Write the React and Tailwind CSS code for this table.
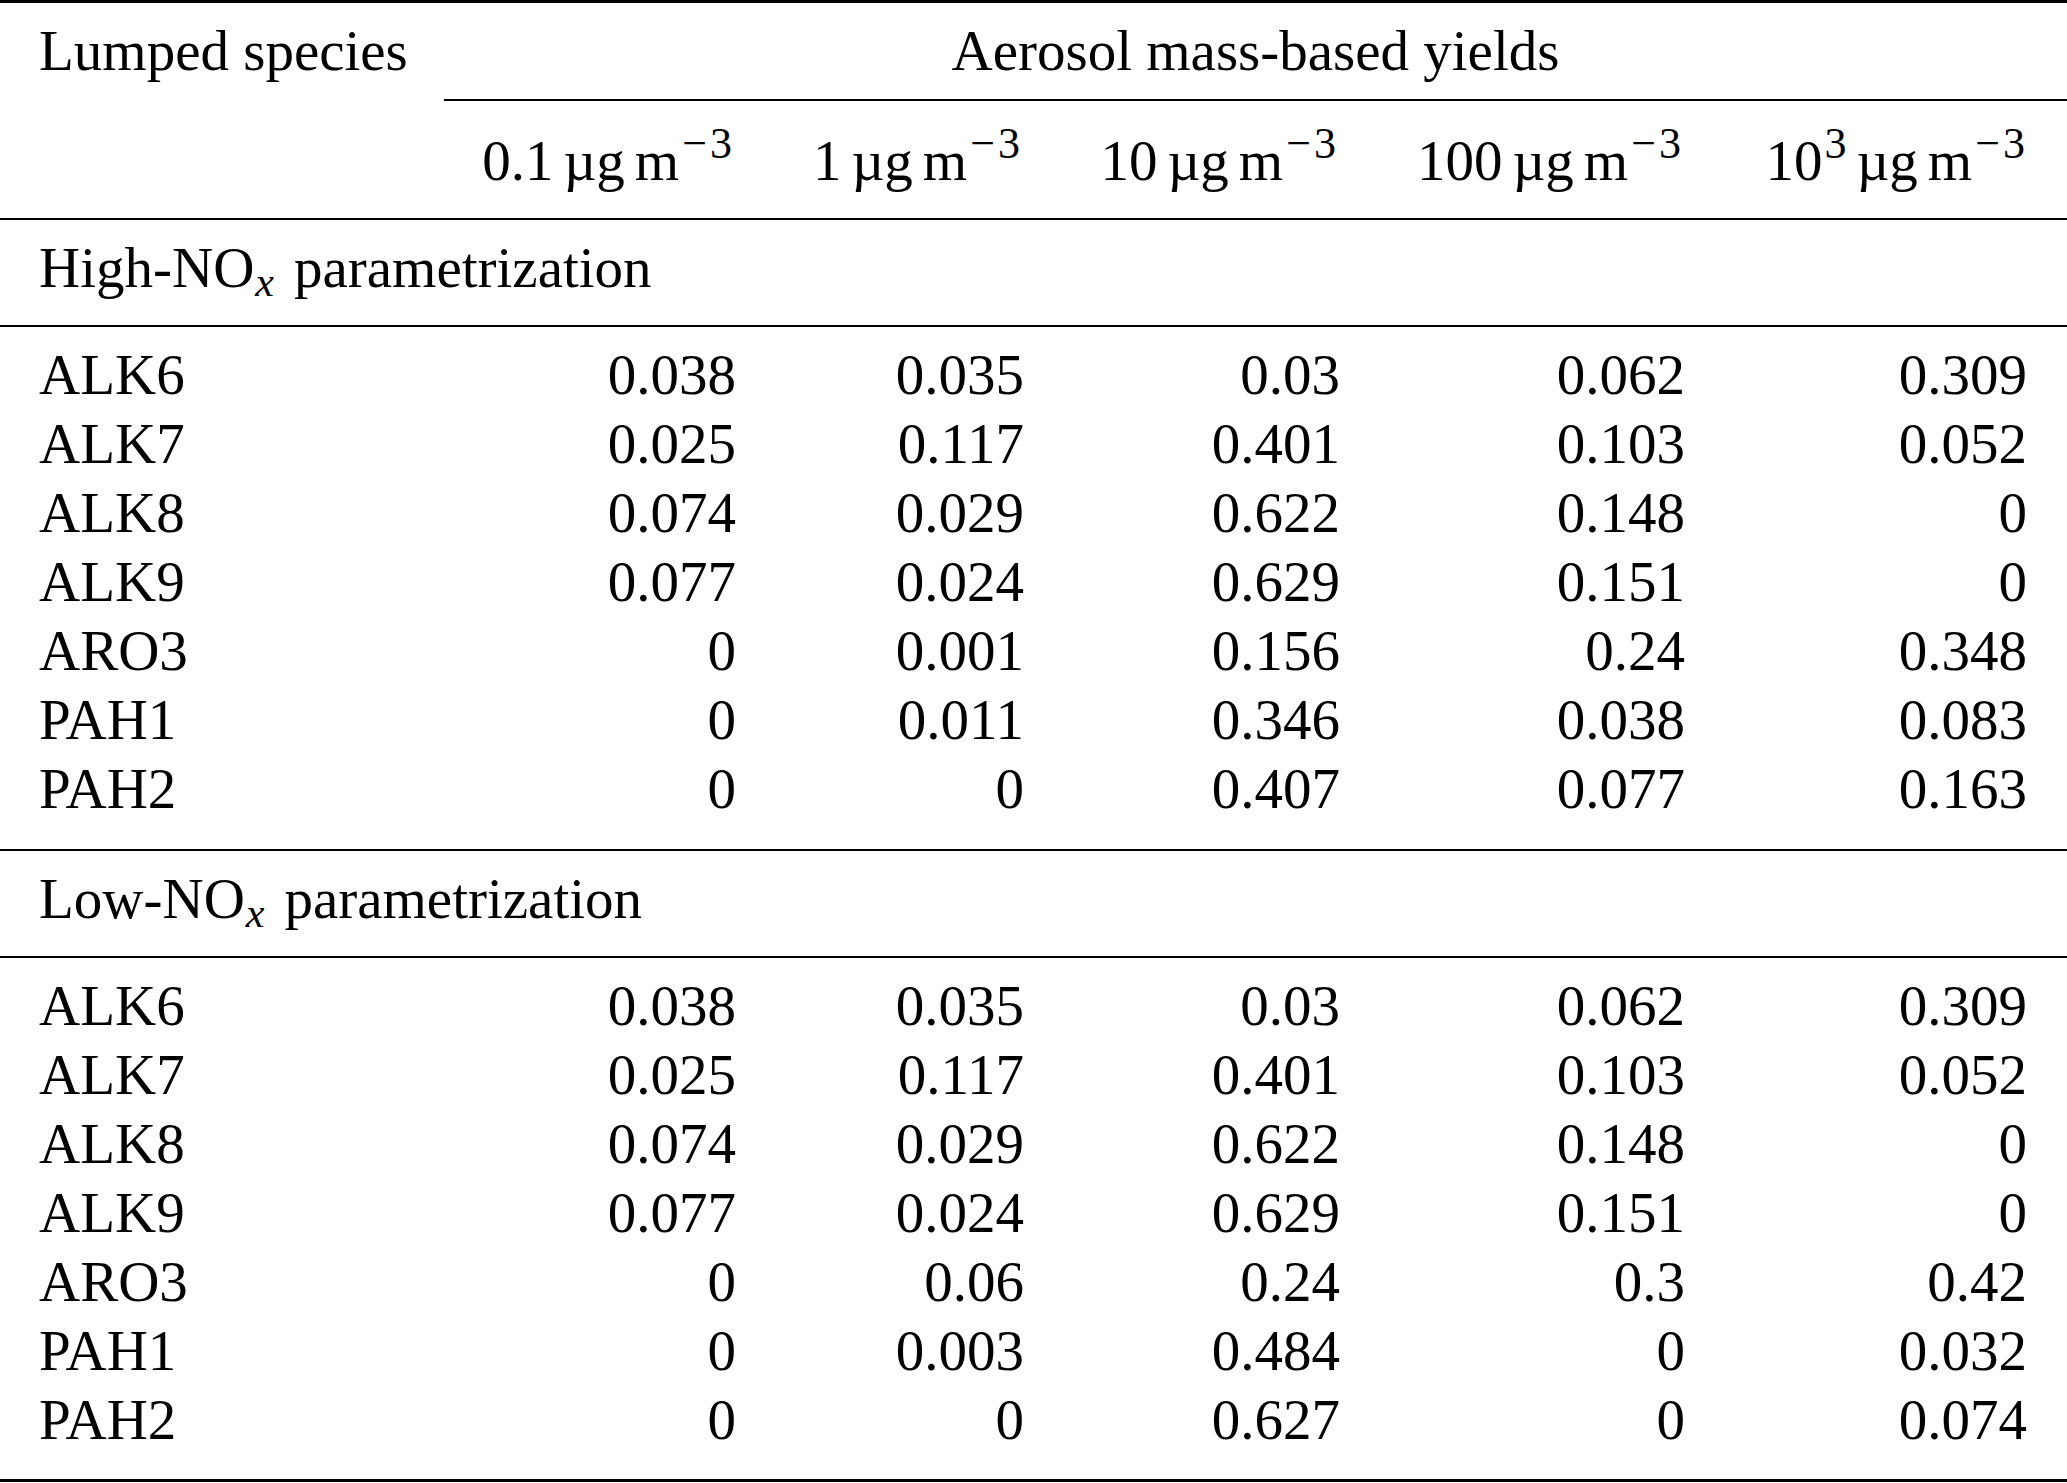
import React from 'react';

const high = [
  ['ALK6', '0.038', '0.035', '0.03', '0.062', '0.309'],
  ['ALK7', '0.025', '0.117', '0.401', '0.103', '0.052'],
  ['ALK8', '0.074', '0.029', '0.622', '0.148', '0'],
  ['ALK9', '0.077', '0.024', '0.629', '0.151', '0'],
  ['ARO3', '0', '0.001', '0.156', '0.24', '0.348'],
  ['PAH1', '0', '0.011', '0.346', '0.038', '0.083'],
  ['PAH2', '0', '0', '0.407', '0.077', '0.163'],
];

const low = [
  ['ALK6', '0.038', '0.035', '0.03', '0.062', '0.309'],
  ['ALK7', '0.025', '0.117', '0.401', '0.103', '0.052'],
  ['ALK8', '0.074', '0.029', '0.622', '0.148', '0'],
  ['ALK9', '0.077', '0.024', '0.629', '0.151', '0'],
  ['ARO3', '0', '0.06', '0.24', '0.3', '0.42'],
  ['PAH1', '0', '0.003', '0.484', '0', '0.032'],
  ['PAH2', '0', '0', '0.627', '0', '0.074'],
];

const cols = 'grid grid-cols-[444px_292px_288px_316px_345px_1fr]';

const Unit = ({ value, exp }) => (
  <span>
    {value}
    {exp && <span className="text-[44px] leading-[0] align-[22px] ml-[2px]">{exp}</span>}
    <span className="ml-[10px]">µg</span>
    <span className="ml-[10px]">m</span>
    <span className="text-[44px] leading-[0] align-[22px] ml-[3px]">
      <span className="mr-[3px]">−</span>3
    </span>
  </span>
);

const Section = ({ label }) => (
  <div className="pl-[39px] pt-[13px] pb-[23px] leading-[69px] border-b-2 border-black">
    {label}-NO<span className="italic text-[42px] leading-[0] align-[-9px] ml-[1px]">x</span>
    <span className="ml-[20px]">parametrization</span>
  </div>
);

const Rows = ({ data, last }) => (
  <div className={`pt-[13px] ${last ? 'pb-[25px] border-b-[3px]' : 'pb-[26px] border-b-2'} border-black`}>
    {data.map((row) => (
      <div key={row[0]} className={`${cols} leading-[69px]`}>
        <div className="pl-[39px]">{row[0]}</div>
        {row.slice(1).map((v, i) => (
          <div key={i} className={`text-right ${i === 4 ? 'pr-[40px]' : ''}`}>
            {v}
          </div>
        ))}
      </div>
    ))}
  </div>
);

export default function App() {
  return (
    <div className="w-[2067px] bg-white text-black font-['Liberation_Serif',serif] text-[57px]">
      <div className="border-t-[3px] border-black">
        {/* header */}
        <div className={cols}>
          <div className="pl-[39px] pt-[13px] pb-[16px] leading-[69px]">Lumped species</div>
          <div className="col-span-5 pt-[13px] pb-[14px] leading-[69px] text-center border-b-2 border-black">
            Aerosol mass-based yields
          </div>
        </div>
        <div className={`${cols} pt-[25px] pb-[23px] leading-[69px] border-b-2 border-black`}>
          <div />
          <div className="text-right pr-[4px]"><Unit value="0.1" /></div>
          <div className="text-right pr-[4px]"><Unit value="1" /></div>
          <div className="text-right pr-[4px]"><Unit value="10" /></div>
          <div className="text-right pr-[4px]"><Unit value="100" /></div>
          <div className="text-right pr-[42px]"><Unit value="10" exp="3" /></div>
        </div>

        <Section label="High" />
        <Rows data={high} />
        <Section label="Low" />
        <Rows data={low} last />
      </div>
    </div>
  );
}
